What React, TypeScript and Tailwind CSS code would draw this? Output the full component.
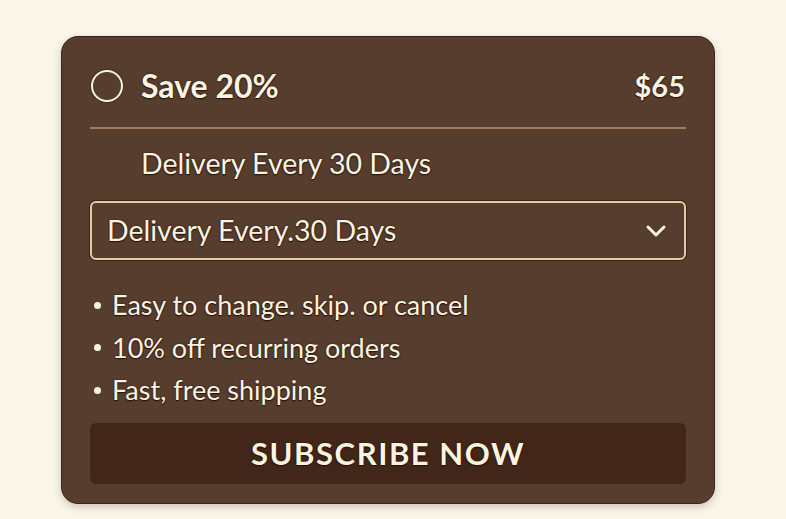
import React from "react";

const perks = [
  "Easy to change. skip. or cancel",
  "10% off recurring orders",
  "Fast, free shipping",
];

const glow = "[text-shadow:0_0_2px_#24140b,0_1px_1px_#24140b]";

export default function App() {
  return (
    <div
      className="min-h-[519px] w-full bg-[#fbf6ea] pt-[36px] pl-[61px]"
      style={{ fontFamily: "Lato, 'Noto Sans', sans-serif" }}
    >
      <div className="flex w-[654px] flex-col rounded-[17px] border border-[#3a2618] bg-[#573d2d] px-[28px] pb-[19px] pt-[28px] text-[#fbf3e4] shadow-[0_3px_8px_rgba(70,45,20,0.25)]">
        {/* plan header */}
        <div className="flex h-[42px] items-center justify-between">
          <div className="flex items-center">
            <span className="ml-[1px] h-[32px] w-[32px] rounded-full border-[2.5px] border-[#fbf3e4] shadow-[0_0_2px_#24140b]" />
            <span className={`ml-[18px] text-[32px] font-bold ${glow}`}>Save 20%</span>
          </div>
          <span className={`mr-[1px] text-[29px] font-bold ${glow}`}>$65</span>
        </div>

        <div className="mt-[20px] h-[2px] bg-[#a0785a]" />

        <div className={`mt-[18px] pl-[51px] text-[28.5px] leading-[32px] ${glow}`}>
          Delivery Every 30 Days
        </div>

        {/* delivery frequency select */}
        <div className="mt-[22px] flex h-[59px] items-center justify-between rounded-[6px] border-2 border-[#e8c9a6] pl-[15px] pr-[16px] shadow-[0_0_0_1px_#3a2618]">
          <span className={`text-[28.5px] ${glow}`}>Delivery Every.30 Days</span>
          <svg width="22" height="14" viewBox="0 0 22 14" fill="none" className="mr-[1px]">
            <path
              d="M3 3l8 8 8-8"
              stroke="#fbf3e4"
              strokeWidth="3"
              strokeLinecap="round"
              strokeLinejoin="round"
            />
          </svg>
        </div>

        <ul className="mt-[24px] flex flex-col">
          {perks.map((p) => (
            <li key={p} className={`flex h-[42.5px] items-center text-[27px] ${glow}`}>
              <span className="ml-[4px] mr-[11px] h-[7px] w-[7px] rounded-full bg-[#fbf3e4]" />
              {p}
            </li>
          ))}
        </ul>

        <button
          className={`mt-[11px] flex h-[61px] items-center justify-center rounded-[6px] bg-[#42261a] text-[31px] font-bold tracking-[0.05em] text-[#fdf4df] ${glow}`}
        >
          SUBSCRIBE NOW
        </button>
      </div>
    </div>
  );
}
